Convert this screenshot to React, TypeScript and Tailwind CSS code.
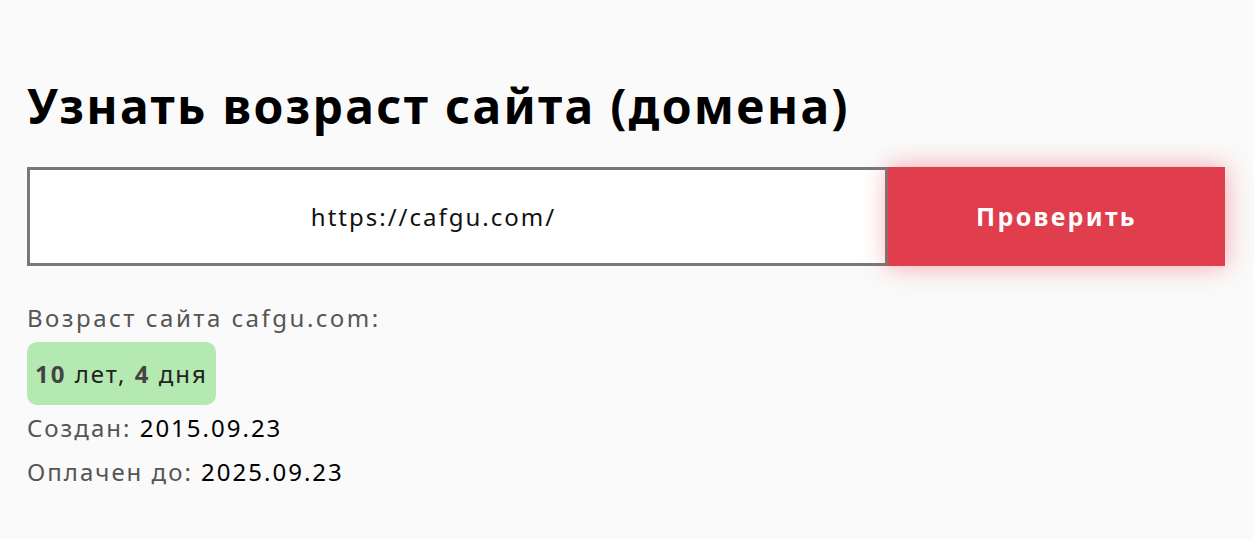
export default function App() {
  const font = { fontFamily: '"Noto Sans", "Open Sans", sans-serif' };
  return (
    <div className="min-h-[539px] w-full bg-[#fafafa] text-black" style={font}>
      <div className="pl-[27px] pr-[29px] pt-[76px]">
        <h1 className="text-[48px] font-bold leading-[60px] tracking-[2.3px]">
          Узнать возраст сайта (домена)
        </h1>

        {/* Form */}
        <div className="mt-[31px] flex h-[99px]">
          <div className="flex flex-1 items-center justify-center border-[3px] border-[#787878] bg-white pr-[48px] text-[24px] tracking-[2px] text-[#111]">
            https://cafgu.com/
          </div>
          <button className="w-[337px] bg-[#e03d4d] text-[25px] font-bold tracking-[2.3px] text-white shadow-[0_0_24px_rgba(240,60,70,0.45)]">
            Проверить
          </button>
        </div>

        {/* Result */}
        <div className="text-[24px] tracking-[2px]">
          <div className="mt-[36px] leading-[32px] tracking-[2.5px] text-[#555]">
            Возраст сайта cafgu.com:
          </div>
          <div className="mt-[8px] inline-flex h-[63px] items-center rounded-[10px] bg-[#b4e9b1] px-[8px] text-[#222]">
            <b className="text-[#444]">10</b>&nbsp;лет,&nbsp;<b className="text-[#444]">4</b>&nbsp;дня
          </div>
          <div className="leading-[45px] text-[#555]">
            Создан: <span className="text-black">2015.09.23</span>
          </div>
          <div className="leading-[44px] text-[#555]">
            Оплачен до: <span className="text-black">2025.09.23</span>
          </div>
        </div>
      </div>
    </div>
  );
}
